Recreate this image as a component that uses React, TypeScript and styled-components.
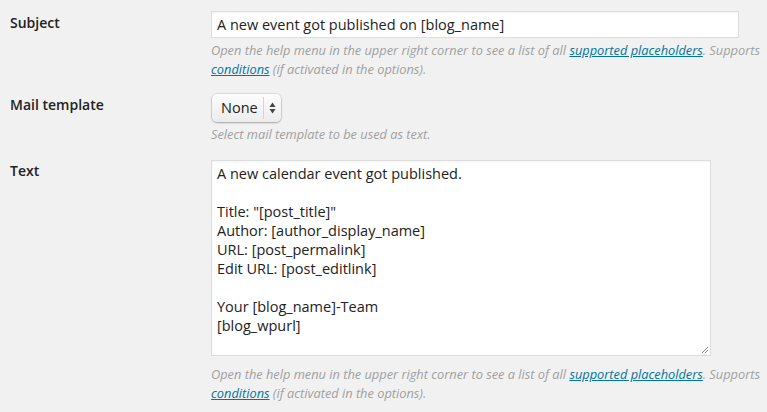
import React from "react";
import styled, { createGlobalStyle } from "styled-components";

const Global = createGlobalStyle`
  html, body { margin: 0; padding: 0; background: #f1f1f1; }
  body { font-family: "Open Sans", "Liberation Sans", sans-serif; color: #222; }
`;

const Page = styled.div`
  width: 767px;
  height: 412px;
  overflow: hidden;
  padding: 11px 0 0 10px;
  box-sizing: border-box;
`;

const Row = styled.div<{ $gap: number }>`
  display: grid;
  grid-template-columns: 201px 1fr;
  margin-bottom: ${(p) => p.$gap}px;
`;

const Label = styled.div<{ $top: number }>`
  font-size: 14px;
  font-weight: 600;
  line-height: 20px;
  padding-top: ${(p) => p.$top}px;
  color: #222;
`;

const Field = styled.div`
  display: flex;
  flex-direction: column;
  align-items: flex-start;
`;

const TextInput = styled.div`
  width: 528px;
  height: 27px;
  box-sizing: border-box;
  border: 1px solid #dddddd;
  background: #fff;
  box-shadow: inset 0 1px 2px rgba(0, 0, 0, 0.05);
  font-size: 14.5px;
  line-height: 25px;
  padding: 0 5px;
  color: #222;
`;

const Select = styled.div`
  display: flex;
  align-items: stretch;
  height: 28px;
  box-sizing: border-box;
  margin: 1px 0 0 1px;
  border-radius: 5px;
  background: linear-gradient(#fdfdfd, #ececec);
  box-shadow: 0 0 0 1px rgba(0, 0, 0, 0.08), 0 1px 2px rgba(0, 0, 0, 0.25);
  font-size: 14.5px;
  color: #222;
`;

const SelectText = styled.span`
  padding: 0 5px 0 9px;
  border-right: 1px solid #d4d4d4;
  margin: 3px 0;
  line-height: 22px;
`;

const SelectArrows = styled.span`
  display: flex;
  align-items: center;
  justify-content: center;
  width: 17px;
`;

const TextArea = styled.div`
  position: relative;
  width: 500px;
  height: 196px;
  box-sizing: border-box;
  margin-bottom: 6px;
  border: 1px solid #dddddd;
  background: #fff;
  box-shadow: inset 0 1px 2px rgba(0, 0, 0, 0.05);
  font-size: 14.5px;
  line-height: 19px;
  padding: 3px 5px;
  white-space: pre;
  color: #222;
`;

const Grip = styled.svg`
  position: absolute;
  right: 1px;
  bottom: 1px;
`;

const Help = styled.p`
  margin: 3px 0 0;
  font-size: 12.8px;
  font-style: italic;
  line-height: 19px;
  color: #a0a0a0;
  width: 556px;
`;

const Link = styled.a`
  color: #0074a2;
  text-decoration: underline;
`;

const PlaceholderHelp = () => (
  <Help>
    Open the help menu in the upper right corner to see a list of all{" "}
    <Link href="#">supported placeholders</Link>. Supports{" "}
    <Link href="#">conditions</Link> (if activated in the options).
  </Help>
);

const bodyText = `A new calendar event got published.

Title: "[post_title]"
Author: [author_display_name]
URL: [post_permalink]
Edit URL: [post_editlink]

Your [blog_name]-Team
[blog_wpurl]`;

export default function App() {
  return (
    <>
      <Global />
      <Page>
        <Row $gap={14}>
          <Label $top={2}>Subject</Label>
          <Field>
            <TextInput>A new event got published on [blog_name]</TextInput>
            <PlaceholderHelp />
          </Field>
        </Row>
        <Row $gap={16}>
          <Label $top={2}>Mail template</Label>
          <Field>
            <Select>
              <SelectText>None</SelectText>
              <SelectArrows>
                <svg width="7" height="12" viewBox="0 0 7 12">
                  <path d="M3.5 0.5 L6.5 5 L0.5 5 Z" fill="#444" />
                  <path d="M3.5 11.5 L6.5 7 L0.5 7 Z" fill="#444" />
                </svg>
              </SelectArrows>
            </Select>
            <Help>Select mail template to be used as text.</Help>
          </Field>
        </Row>
        <Row $gap={0}>
          <Label $top={1}>Text</Label>
          <Field>
            <TextArea>
              {bodyText}
              <Grip width="8" height="8" viewBox="0 0 8 8">
                <path d="M7 1 L1 7 M7 4 L4 7" stroke="#888" strokeWidth="1" />
              </Grip>
            </TextArea>
            <PlaceholderHelp />
          </Field>
        </Row>
      </Page>
    </>
  );
}
